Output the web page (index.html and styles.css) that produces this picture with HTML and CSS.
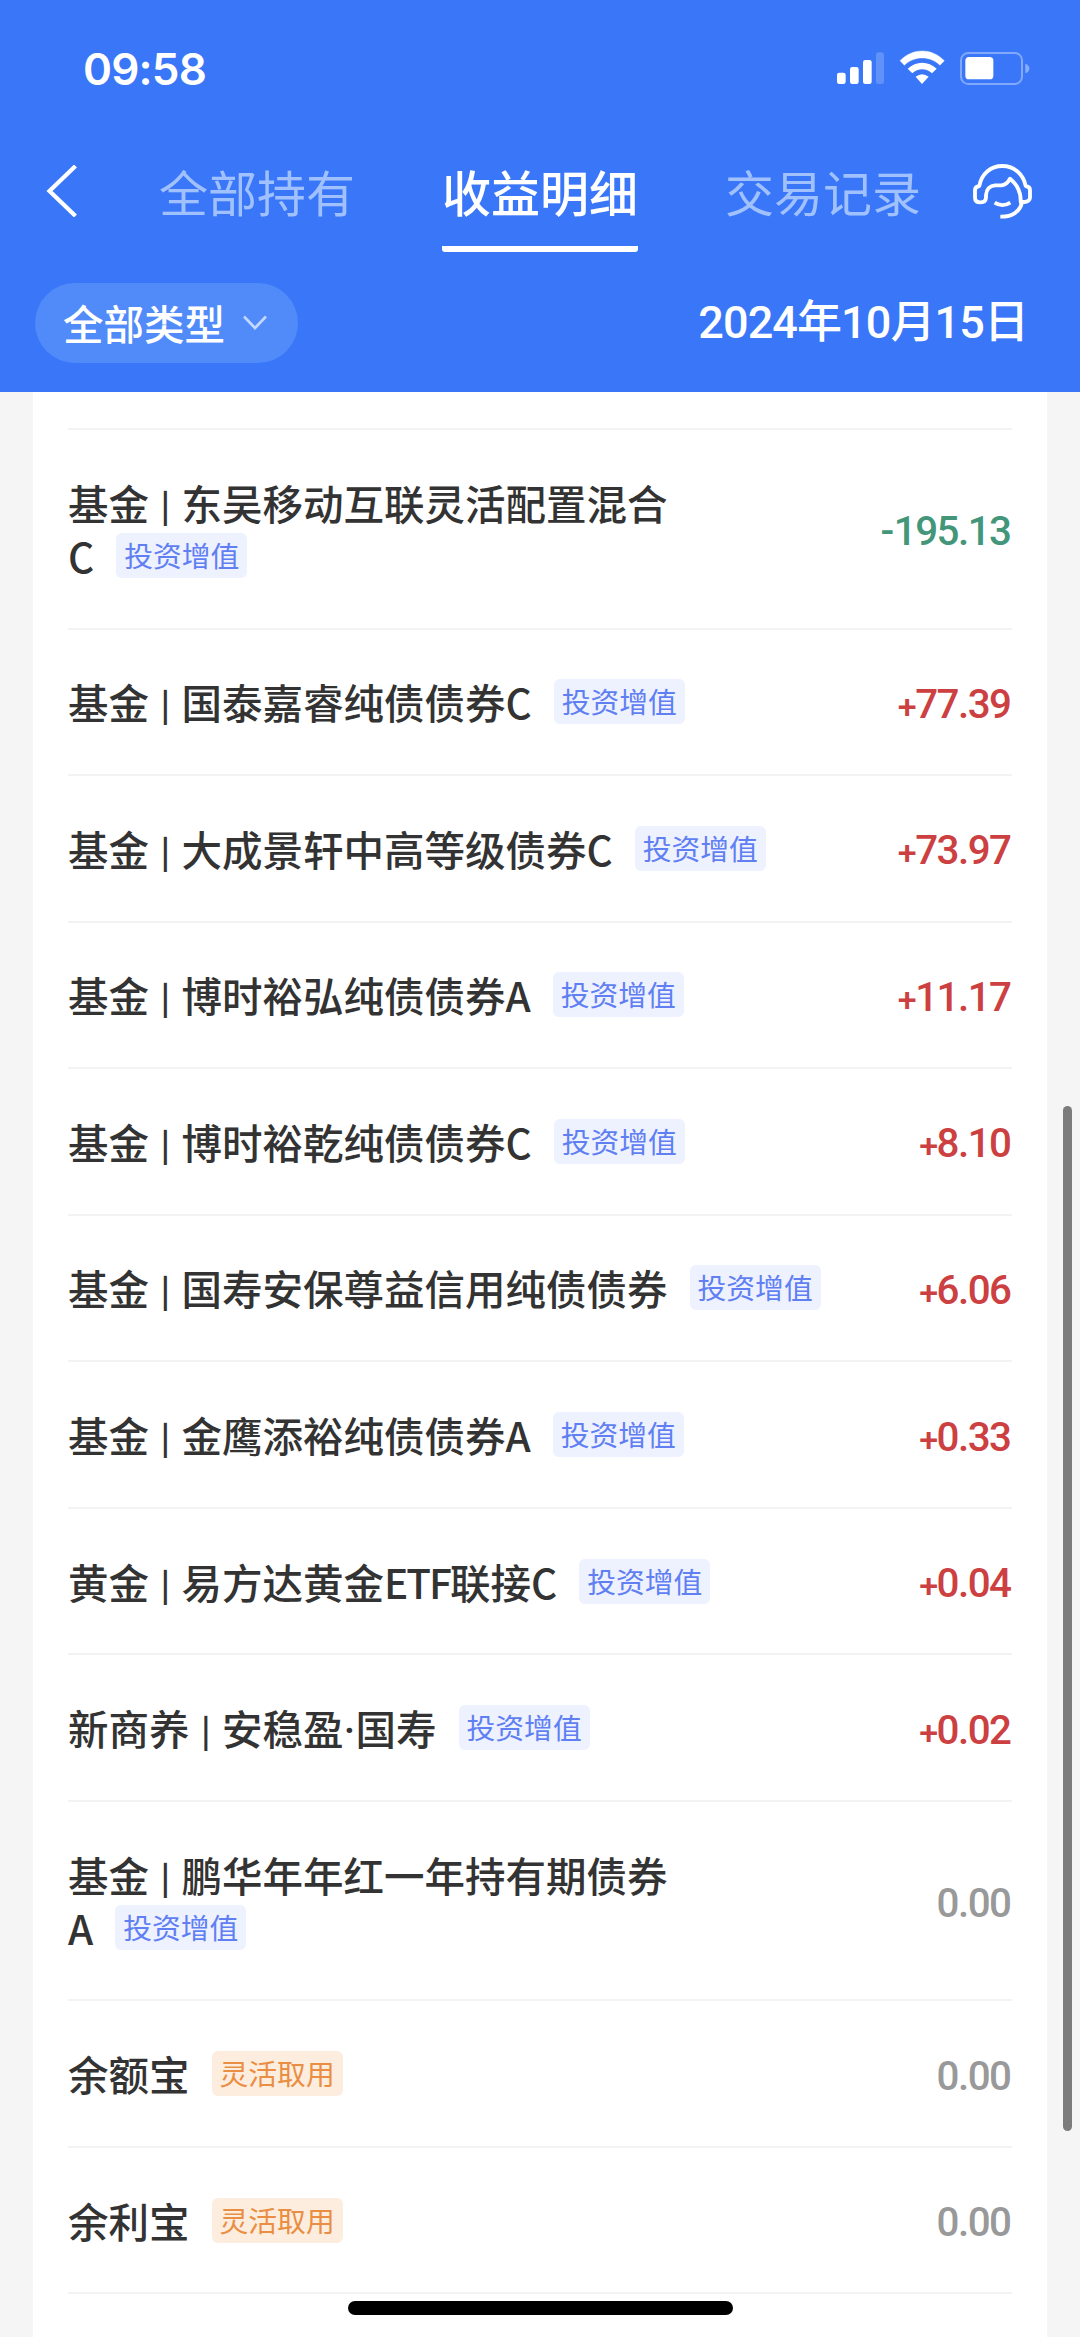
FILE: index.html
```html
<!DOCTYPE html>
<html lang="zh-CN">
<head>
<meta charset="utf-8">
<title>收益明细</title>
<link rel="stylesheet" href="styles.css">
</head>
<body>
<header class="header">
  <div class="status">
    <span class="clock">09:58</span>
    <svg class="status-icons" viewBox="51 60 579 108" width="193" height="36" fill="#fff">
      <rect x="51" y="128" width="26" height="34" rx="7"/>
      <rect x="90" y="111" width="26" height="51" rx="7"/>
      <rect x="129" y="90" width="26" height="72" rx="7"/>
      <rect x="168" y="67" width="24" height="95" rx="7" opacity=".2"/>
      <path d="M240 92C278 53 335 53 373 92L360 106C330 77 283 77 253 106Z" stroke="#fff" stroke-width="1"/>
      <path d="M263 116C288 92 325 92 350 116L336 130C319 114 294 114 277 130Z"/>
      <path d="M287 140Q306 125 326 140L306 162Z"/>
      <rect x="423" y="69" width="183" height="93" rx="22" fill="none" stroke="#fff" stroke-width="6" opacity=".36"/>
      <rect x="436" y="81" width="84" height="67" rx="11"/>
      <path d="M616 101Q628 105 628 115.500Q628 126 616 130Z" opacity=".4"/>
    </svg>
  </div>
  <nav class="nav">
    <svg class="back" viewBox="0 0 32 52" width="32" height="52" fill="none" stroke="#fff" stroke-width="4.200"><path d="M29.500 1L3.500 26L29.500 51"/></svg>
    <div class="tabs">
      <span class="tab">全部持有</span>
      <span class="tab active">收益明细</span>
      <span class="tab">交易记录</span>
    </div>
    <svg class="service" viewBox="459 402 177 165" width="59" height="55" fill="none" stroke="#fff" stroke-width="11.500" stroke-linejoin="round">
      <path d="M478 468C484 432 512 408 547 408C582 408 610 432 617 468Q630 470 630 480V503Q629 515 614 516H602C603 496 597 480 590 468Q582 456 570 446Q561 464 545 466H525C510 467 499 478 498 495V503Q497 517 482 517Q465 517 465 503V479Q466 470 478 468Z"/>
      <path d="M606 515C602 545 575 561 541 560"/>
      <path d="M524 518Q547 533 571 518"/>
    </svg>
  </nav>
  <div class="filters">
    <div class="type">全部类型<svg viewBox="0 0 24 16" width="24" height="16" fill="none" stroke="#c2d8fe" stroke-width="2.600"><path d="M1 1.500L12 13L23 1.500"/></svg></div>
    <div class="date">2024年10月15日</div>
  </div>
</header>
<main class="card">
  <div class="row two"><div class="name">基金<i>|</i>东吴移动互联灵活配置混合<br>C<b class="tag">投资增值</b></div><div class="amt down"><span class="minus">-</span>195.13</div></div>
  <div class="row"><div class="name">基金<i>|</i>国泰嘉睿纯债债券C<b class="tag">投资增值</b></div><div class="amt up"><span class="plus">+</span>77.39</div></div>
  <div class="row"><div class="name">基金<i>|</i>大成景轩中高等级债券C<b class="tag">投资增值</b></div><div class="amt up"><span class="plus">+</span>73.97</div></div>
  <div class="row"><div class="name">基金<i>|</i>博时裕弘纯债债券A<b class="tag">投资增值</b></div><div class="amt up"><span class="plus">+</span>11.17</div></div>
  <div class="row"><div class="name">基金<i>|</i>博时裕乾纯债债券C<b class="tag">投资增值</b></div><div class="amt up"><span class="plus">+</span>8.10</div></div>
  <div class="row"><div class="name">基金<i>|</i>国寿安保尊益信用纯债债券<b class="tag">投资增值</b></div><div class="amt up"><span class="plus">+</span>6.06</div></div>
  <div class="row"><div class="name">基金<i>|</i>金鹰添裕纯债债券A<b class="tag">投资增值</b></div><div class="amt up"><span class="plus">+</span>0.33</div></div>
  <div class="row"><div class="name">黄金<i>|</i>易方达黄金<span class="latin">ETF</span>联接C<b class="tag">投资增值</b></div><div class="amt up"><span class="plus">+</span>0.04</div></div>
  <div class="row"><div class="name">新商养<i>|</i>安稳盈<span class="dot">·</span>国寿<b class="tag">投资增值</b></div><div class="amt up"><span class="plus">+</span>0.02</div></div>
  <div class="row two"><div class="name">基金<i>|</i>鹏华年年红一年持有期债券<br>A<b class="tag">投资增值</b></div><div class="amt">0.00</div></div>
  <div class="row"><div class="name">余额宝<b class="tag cash">灵活取用</b></div><div class="amt">0.00</div></div>
  <div class="row"><div class="name">余利宝<b class="tag cash">灵活取用</b></div><div class="amt">0.00</div></div>
</main>
<div class="scrollbar"></div>
<div class="home"></div>
</body>
</html>
```
FILE: styles.css
```css
* { box-sizing: border-box; }
body {
  margin: 0;
  width: 1080px;
  height: 2337px;
  overflow: hidden;
  position: relative;
  display: flex;
  flex-direction: column;
  background: #f5f5f5;
  font-family: "Noto Sans CJK SC", sans-serif;
}
.header {
  flex: none;
  height: 392px;
  background: #3a77f8;
  color: #fff;
}
.status {
  height: 138px;
  padding: 50px 50px 0 83px;
  display: flex;
  justify-content: space-between;
  align-items: flex-start;
}
.clock {
  font: 600 44px/38px Inter, sans-serif;
  letter-spacing: -.8px;
}
.status-icons { display: block; }
.nav {
  height: 114px;
  padding: 0 48px 0 46px;
  display: flex;
  align-items: stretch;
}
.back { margin-top: 27px; }
.tabs {
  flex: 1;
  margin-left: 81px;
  display: flex;
  gap: 87px;
}
.tab {
  width: 196px;
  white-space: nowrap;
  padding-top: 17px;
  font-size: 49px;
  line-height: 72px;
  font-weight: 400;
  color: #a0c1fd;
}
.active {
  font-weight: 500;
  color: #fff;
  border-bottom: 6px solid #fff;
  border-radius: 3px;
}
.service { margin-top: 26px; }
.filters {
  margin-top: 31px;
  height: 80px;
  padding: 0 52px 0 35px;
  display: flex;
  justify-content: space-between;
}
.type {
  width: 263px;
  height: 80px;
  padding-left: 28px;
  border-radius: 40px;
  background: #518bf9;
  display: flex;
  align-items: center;
  gap: 18px;
  font-size: 40.500px;
  line-height: 80px;
  font-weight: 500;
}
.date {
  font: 500 45px/79px Roboto, "Noto Sans CJK SC", sans-serif;
  letter-spacing: -.9px;
}
.card {
  flex: 1;
  margin: 0 33px;
  padding: 36px 35px 0;
  background: #fff;
}
.row {
  height: 146.560px;
  border-top: 2px solid #f3f3f3;
  display: flex;
  justify-content: space-between;
  align-items: center;
}
.row:last-child {
  height: 148.500px;
  border-bottom: 2px solid #f3f3f3;
}
.two { height: 199.500px; }
.name {
  font-size: 40.500px;
  line-height: 53px;
  font-weight: 500;
  color: #333;
  white-space: nowrap;
}
.name i {
  display: inline-block;
  vertical-align: 3px;
  width: 32.500px;
  text-align: center;
  font-style: normal;
  font-weight: 700;
  font-size: 31px;
  line-height: 40px;
}
.latin { letter-spacing: -2px; }
.dot {
  display: inline-block;
  width: 12px;
  text-align: center;
  font-family: Roboto, sans-serif;
  line-height: 40px;
}
.tag {
  display: inline-block;
  vertical-align: 6px;
  height: 45px;
  margin: -10px 0 -10px 22px;
  padding: 0 8px;
  border-radius: 6px;
  background: #eef1fe;
  color: #5f7ff3;
  font-size: 28.800px;
  line-height: 44px;
  font-weight: 400;
}
.cash {
  background: #fdeddf;
  color: #e98e43;
}
.amt {
  font: 500 40.300px/53px Roboto, sans-serif;
  letter-spacing: -1.500px;
  padding: 5px 1.500px 0 0;
  color: #999;
}
.plus {
  font-size: 34px;
  margin-right: 0;
}
.minus { margin-right: 1px; }
.up {
  color: #cc4041;
  padding-top: 7px;
}
.down { color: #43967a; }
.scrollbar {
  position: absolute;
  left: 1063px;
  top: 1106px;
  width: 9px;
  height: 1025px;
  border-radius: 5px;
  background: #7c7c7c;
}
.home {
  position: absolute;
  left: 348px;
  top: 2301px;
  width: 385px;
  height: 14px;
  border-radius: 7px;
  background: #000;
}
```
